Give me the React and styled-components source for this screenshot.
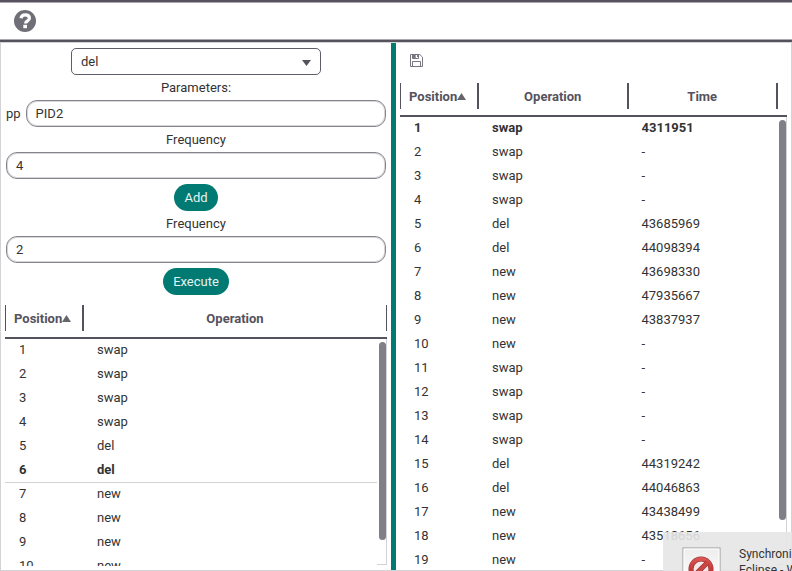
import React from "react";
import styled, { createGlobalStyle } from "styled-components";

const ink = "#55525d";
const teal = "#007a72";
const hairline = "#d3d3d6";

const GlobalStyle = createGlobalStyle`
  *, *::before, *::after { box-sizing: border-box; }
  body { margin: 0; background: #fff; }
  body, button, input, select {
    font-family: Roboto, "Liberation Sans", sans-serif;
    font-size: 13px;
    line-height: 16px;
    color: #333;
  }
`;

const Window = styled.div`
  position: relative;
  display: flex;
  flex-direction: column;
  height: 100vh;
  overflow: hidden;
`;

const Toolbar = styled.header`
  flex: none;
  display: flex;
  align-items: center;
  height: 42px;
  padding: 0 14px;
  border-top: 2px solid ${ink};
  border-bottom: 2px solid ${ink};
  box-shadow: inset 0 1px 0 #aaa8ae, inset 0 -1px 0 #aaa8ae;
`;

const IconButton = styled.button`
  display: flex;
  padding: 0;
  border: 0;
  background: none;
`;

const Workspace = styled.main`
  flex: 1;
  min-height: 0;
  display: grid;
  grid-template-columns: minmax(0, 390fr) 5px minmax(0, 395fr);
  border: 1px solid ${hairline};
`;

const Pane = styled.section`
  display: flex;
  flex-direction: column;
  min-height: 0;
  padding: 5px 4px 4px;
`;

const Splitter = styled.div`
  background: ${teal};
`;

const Form = styled.form`
  display: flex;
  flex-direction: column;
  align-items: center;
  padding: 0 1px 10px;
`;

const SelectBox = styled.div`
  display: grid;
  align-items: center;
  width: 250px;
  max-width: 100%;

  & > * { grid-area: 1 / 1; }
  & > svg { justify-self: end; margin: 2px 10px 0 0; pointer-events: none; }
`;

const Select = styled.select`
  appearance: none;
  width: 100%;
  height: 27px;
  padding: 0 9px;
  border: 1px solid #5f5d6a;
  border-radius: 5px;
  background: #fff;
`;

const Caption = styled.label`
  line-height: 25px;
`;

const FieldRow = styled.div`
  display: flex;
  align-items: center;
  gap: 5px;
  width: 100%;
`;

const TextInput = styled.input`
  flex: 1;
  min-width: 0;
  height: 27px;
  padding: 0 9px;
  border: 1px solid #85848d;
  border-radius: 11px;
  background: #fff;
  box-shadow: inset 0 0 0 1px #d8d7db;
`;

const PillButton = styled.button`
  height: 27px;
  margin-top: 5px;
  padding: 0 10px;
  border: 0;
  border-radius: 14px;
  background: ${teal};
  color: #e6f3f2;
`;

const PaneTools = styled.div`
  display: flex;
  padding: 6px 10px 16px;
`;

const TableView = styled.div`
  position: relative;
  flex: 1;
  min-height: 0;
  overflow: hidden;
`;

const Table = styled.table`
  width: 100%;
  table-layout: fixed;
  border-collapse: separate;
  border-spacing: 0;
`;

const HeadCell = styled.th`
  padding: 0 0 6px;
  border-bottom: 2px solid ${ink};
  color: ${ink};
  font-weight: 700;
`;

const HeadLabel = styled.div`
  display: flex;
  align-items: center;
  justify-content: ${({ $sorted }) => ($sorted ? "flex-start" : "center")};
  height: 26px;
  padding: 2px 0 0 ${({ $sorted }) => ($sorted ? "8px" : "0")};
  border: solid ${ink};
  border-width: ${({ $end }) => ($end ? "0 0 0 1px" : "0 1px")};

  & > svg { margin-bottom: 2px; }
`;

const Row = styled.tr`
  font-weight: ${({ $active }) => ($active ? 700 : 400)};
`;

const Cell = styled.td`
  height: 24px;
  padding: 0 14px ${({ $line }) => ($line ? "1px" : "2px")};
  white-space: nowrap;
  border-bottom: ${({ $line }) => ($line ? `1px solid ${hairline}` : "0")};
`;

const ScrollTrack = styled.div`
  position: absolute;
  top: 34px;
  right: 0;
  bottom: 1px;
  width: 10px;
  padding: 3px 0 0 2px;
  border: solid ${hairline};
  border-width: 0 1px 1px 0;
  background: #fff;
`;

const ScrollThumb = styled.div`
  width: 7px;
  height: ${({ $size }) => $size}%;
  border-radius: 4px;
  background: #807f88;
`;

const Notice = styled.aside`
  position: absolute;
  right: 0;
  bottom: 0;
  display: flex;
  align-items: flex-start;
  gap: 18px;
  width: 129px;
  height: 39px;
  padding: 14px 0 0 19px;
  overflow: hidden;
  background: rgba(230, 230, 229, 0.9);
  font-size: 12px;
  line-height: 16px;
  white-space: nowrap;

  & > svg { flex: none; }
`;

function HelpIcon() {
  return (
    <svg width="22" height="22" viewBox="0 0 22 22" aria-hidden="true">
      <circle cx="11" cy="11" r="11" fill="#706f78" />
      <path d="M7 8.3C7.4 5.9 9 4.9 11.2 4.9c2.4 0 4.2 1.2 4.2 3.3 0 2.9-3.8 2.5-3.8 5.4" fill="none" stroke="#fff" strokeWidth="3.2" />
      <rect x="9.3" y="14.8" width="3.7" height="3.4" fill="#fff" />
    </svg>
  );
}

function SaveIcon() {
  return (
    <svg width="13" height="13" viewBox="0 0 13 13" fill="none" stroke="#777681" aria-hidden="true">
      <path d="M.5.5h9.3l2.7 2.7v9.3H.5z" />
      <path d="M2.5.5v4h6v-4M2.5 12.5v-5h8v5" />
      <path d="M3 1h2.7v3.5H3z" fill="#777681" stroke="none" />
      <path d="M7.5 1v2" />
    </svg>
  );
}

function Triangle({ up }) {
  return (
    <svg width={up ? 9 : 9} height={up ? 7 : 6} viewBox="0 0 10 7" preserveAspectRatio="none" fill={up ? "#66656b" : ink} aria-hidden="true">
      <path d={up ? "M5 0l5 7H0z" : "M0 0h10L5 7z"} />
    </svg>
  );
}

function BlockedIcon() {
  return (
    <svg width="39" height="39" viewBox="0 0 39 39" aria-hidden="true">
      <defs>
        <linearGradient id="tile" x1="0" y1="0" x2="0" y2="1">
          <stop stopColor="#ededed" />
          <stop offset="1" stopColor="#fff" />
        </linearGradient>
        <linearGradient id="ring" x1="0" y1="0" x2="0" y2="1">
          <stop stopColor="#d95452" />
          <stop offset="1" stopColor="#b52322" />
        </linearGradient>
      </defs>
      <rect x="1" y="2" width="37" height="37" fill="url(#tile)" stroke="#999" />
      <rect x="2" y="3" width="35" height="35" fill="none" stroke="#fff" />
      <circle cx="19" cy="23" r="10" fill="#f5e9e9" stroke="#8f3030" strokeWidth="5" />
      <circle cx="19" cy="23" r="10" fill="none" stroke="url(#ring)" strokeWidth="4" />
      <path d="M12.5 29.5l13-13" stroke="#8f3030" strokeWidth="5" />
      <path d="M12 30l14-14" stroke="#c94644" strokeWidth="4" />
    </svg>
  );
}

const operations = ["swap", "swap", "swap", "swap", "del", "del", "new", "new", "new", "new"];

const queue = operations.map((name, i) => [i + 1, name]);

const results = [
  [1, "swap", "4311951"],
  [2, "swap", "-"],
  [3, "swap", "-"],
  [4, "swap", "-"],
  [5, "del", "43685969"],
  [6, "del", "44098394"],
  [7, "new", "43698330"],
  [8, "new", "47935667"],
  [9, "new", "43837937"],
  [10, "new", "-"],
  [11, "swap", "-"],
  [12, "swap", "-"],
  [13, "swap", "-"],
  [14, "swap", "-"],
  [15, "del", "44319242"],
  [16, "del", "44046863"],
  [17, "new", "43438499"],
  [18, "new", "43518656"],
  [19, "new", "-"],
];

function DataTable({ columns, rows, active, underline, thumb, gutter }) {
  return (
    <TableView>
      <Table>
        <colgroup>
          <col width="78" />
          {columns.slice(1).map((name) => <col key={name} />)}
          {gutter && <col width="10" />}
        </colgroup>
        <thead>
          <tr>
            {columns.map((name, i) => (
              <HeadCell key={name} scope="col" aria-sort={i === 0 ? "ascending" : undefined}>
                <HeadLabel $sorted={i === 0}>{name}{i === 0 && <Triangle up />}</HeadLabel>
              </HeadCell>
            ))}
            {gutter && <HeadCell as="td"><HeadLabel $end /></HeadCell>}
          </tr>
        </thead>
        <tbody>
          {rows.map((row) => (
            <Row key={row[0]} $active={row[0] === active}>
              {row.map((value, i) => (
                <Cell key={i} $line={underline && row[0] === active}>{value}</Cell>
              ))}
            </Row>
          ))}
        </tbody>
      </Table>
      <ScrollTrack><ScrollThumb $size={thumb} /></ScrollTrack>
    </TableView>
  );
}

export default function App() {
  return (
    <Window>
      <GlobalStyle />
      <Toolbar>
        <IconButton aria-label="Help"><HelpIcon /></IconButton>
      </Toolbar>
      <Workspace>
        <Pane>
          <Form onSubmit={(event) => event.preventDefault()}>
            <SelectBox>
              <Select aria-label="Operation" defaultValue="del">
                <option>swap</option>
                <option>del</option>
                <option>new</option>
              </Select>
              <Triangle />
            </SelectBox>
            <Caption as="div">Parameters:</Caption>
            <FieldRow>
              <label htmlFor="pp">pp</label>
              <TextInput id="pp" defaultValue="PID2" />
            </FieldRow>
            <Caption htmlFor="add-frequency">Frequency</Caption>
            <FieldRow><TextInput id="add-frequency" defaultValue="4" /></FieldRow>
            <PillButton type="button">Add</PillButton>
            <Caption htmlFor="run-frequency">Frequency</Caption>
            <FieldRow><TextInput id="run-frequency" defaultValue="2" /></FieldRow>
            <PillButton type="submit">Execute</PillButton>
          </Form>
          <DataTable columns={["Position", "Operation"]} rows={queue} active={6} underline thumb={89} />
        </Pane>
        <Splitter />
        <Pane>
          <PaneTools>
            <IconButton aria-label="Save"><SaveIcon /></IconButton>
          </PaneTools>
          <DataTable columns={["Position", "Operation", "Time"]} rows={results} active={1} thumb={90} gutter />
        </Pane>
      </Workspace>
      <Notice>
        <BlockedIcon />
        <div>Synchroni<br />Eclipse - W</div>
      </Notice>
    </Window>
  );
}
